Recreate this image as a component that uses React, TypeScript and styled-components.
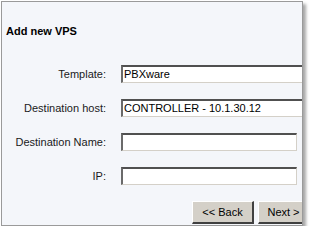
import React from "react";
import styled, { createGlobalStyle } from "styled-components";

const Global = createGlobalStyle`
  html, body { margin: 0; padding: 0; background: #ffffff; }
  body { font-family: "Liberation Sans", Arial, sans-serif; }
`;

const Panel = styled.div`
  box-sizing: border-box;
  margin: 1px 0 0 1px;
  width: 302px;
  height: 225px;
  border: 1px solid #9a9a9a;
  background: #f4f6fa;
  overflow: hidden;
  box-shadow: 3px 3px 3px rgba(0, 0, 0, 0.35);
`;

const Title = styled.h1`
  margin: 23px 0 0 4px;
  font-size: 11px;
  line-height: 13px;
  font-weight: bold;
  color: #000;
`;

const Form = styled.div`
  margin-top: 27px;
  display: grid;
  grid-template-columns: 104px auto;
  column-gap: 15px;
  row-gap: 16px;
  align-items: center;
`;

const Label = styled.label`
  text-align: right;
  font-size: 11px;
  color: #1a1a1a;
  white-space: nowrap;
`;

const Field = styled.div<{ $w: number }>`
  box-sizing: border-box;
  width: ${(p) => p.$w}px;
  height: 18px;
  background: #fff;
  border-style: solid;
  border-width: 2px 1px 1px 2px;
  border-color: #505050 #d4d0c8 #d4d0c8 #6a6a6a;
  font-size: 11px;
  line-height: 15px;
  padding-left: 1px;
  color: #000;
  white-space: nowrap;
`;

const ButtonRow = styled.div`
  margin: 16px 0 0 190px;
  display: flex;
  gap: 4px;
`;

const Button = styled.button<{ $w: number }>`
  box-sizing: border-box;
  flex: 0 0 ${(p) => p.$w}px;
  height: 23px;
  background: #d4d0c8;
  border-style: solid;
  border-width: 1px 2px 2px 1px;
  border-color: #ffffff #404040 #404040 #ffffff;
  font-family: "Liberation Sans", Arial, sans-serif;
  font-size: 11px;
  color: #000;
  padding: 0;
  white-space: nowrap;
`;

export default function App() {
  return (
    <>
      <Global />
      <Panel>
        <Title>Add new VPS</Title>
        <Form>
          <Label>Template:</Label>
          <Field $w={190}>PBXware</Field>
          <Label>Destination host:</Label>
          <Field $w={190}>CONTROLLER - 10.1.30.12</Field>
          <Label>Destination Name:</Label>
          <Field $w={176} />
          <Label>IP:</Label>
          <Field $w={176} />
        </Form>
        <ButtonRow>
          <Button $w={62}>&lt;&lt; Back</Button>
          <Button $w={52}>Next &gt;</Button>
        </ButtonRow>
      </Panel>
    </>
  );
}
